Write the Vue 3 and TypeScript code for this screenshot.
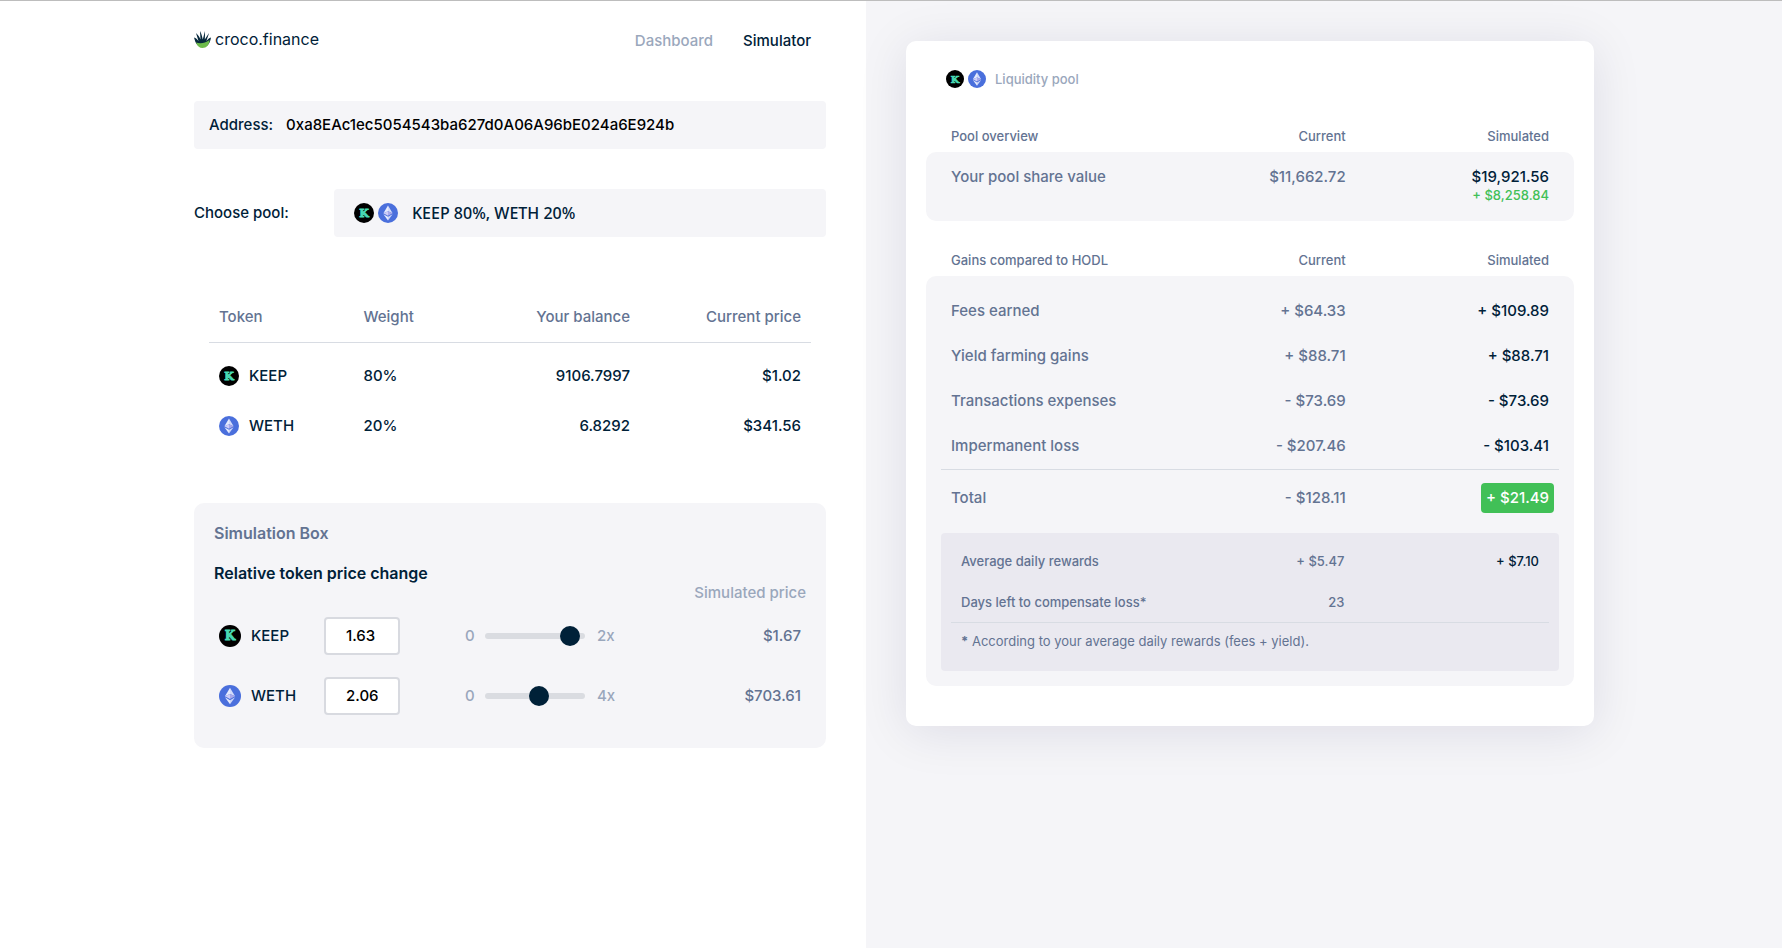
<script setup lang="ts">
import { computed, defineComponent, h, ref } from 'vue'

type Symbol = 'KEEP' | 'WETH'

interface Token {
  symbol: Symbol
  weight: string
  balance: string
  price: string
}

interface Simulation {
  symbol: Symbol
  ratio: string
  max: number
  price: string
}

interface GainRow {
  label: string
  current: string
  simulated: string
}

const TokenIcon = defineComponent({
  props: { symbol: { type: String, required: true } },
  setup(props) {
    return () =>
      props.symbol === 'KEEP'
        ? h('svg', { viewBox: '0 0 20 20', 'aria-hidden': 'true' }, [
            h('circle', { cx: 10, cy: 10, r: 10, fill: '#000' }),
            h(
              'text',
              {
                x: 10,
                y: 14,
                'text-anchor': 'middle',
                'font-family': '"DejaVu Serif", serif',
                'font-weight': 700,
                'font-size': 11,
                fill: '#48dbb4',
                stroke: '#48dbb4',
                'stroke-width': 0.8,
              },
              'K',
            ),
          ])
        : h('svg', { viewBox: '0 0 20 20', 'aria-hidden': 'true' }, [
            h('circle', { cx: 10, cy: 10, r: 10, fill: '#4a6fdc' }),
            h('path', { d: 'M10 2.6 5.4 10.2 10 8.2z', fill: '#e6ebfd' }),
            h('path', { d: 'M10 2.6 14.6 10.2 10 8.2z', fill: '#d3dbfa' }),
            h('path', { d: 'M10 8.2 5.4 10.2 10 12.8z', fill: '#cfcef7' }),
            h('path', { d: 'M10 8.2 14.6 10.2 10 12.8z', fill: '#a9a9ea' }),
            h('path', { d: 'M5.4 11.2 10 13.8V17.6z', fill: '#e6ebfd' }),
            h('path', { d: 'M14.6 11.2 10 13.8V17.6z', fill: '#cdd6f8' }),
          ])
  },
})

const address = ref('0xa8EAc1ec5054543ba627d0A06A96bE024a6E924b')
const pools = ['KEEP 80%, WETH 20%']
const pool = ref(pools[0])

const tokens: Token[] = [
  { symbol: 'KEEP', weight: '80%', balance: '9106.7997', price: '$1.02' },
  { symbol: 'WETH', weight: '20%', balance: '6.8292', price: '$341.56' },
]

const simulations = ref<Simulation[]>([
  { symbol: 'KEEP', ratio: '1.63', max: 2, price: '$1.67' },
  { symbol: 'WETH', ratio: '2.06', max: 4, price: '$703.61' },
])

const gains: GainRow[] = [
  { label: 'Fees earned', current: '+ $64.33', simulated: '+ $109.89' },
  { label: 'Yield farming gains', current: '+ $88.71', simulated: '+ $88.71' },
  { label: 'Transactions expenses', current: '- $73.69', simulated: '- $73.69' },
  { label: 'Impermanent loss', current: '- $207.46', simulated: '- $103.41' },
]

const symbols = computed(() => tokens.map((t) => t.symbol))
</script>

<template>
  <div class="page">
    <main class="left">
      <div class="left-inner">
        <header class="header">
          <a href="#" class="brand">
            <svg class="brand-mark" viewBox="0 0 34 34" aria-hidden="true">
              <path
                d="M0 13C4 14 6 16 9 20L4 4C9 9 11 12 13 17L12 0C15 6 16 10 17.500 17L22 0C22 7 22 11 21.500 17L30 4C28 11 26 15 25 20 28 16 30 14 34 13 33 19 31 25 27 29L8 29C3 25 2 19 0 13Z"
                fill="#06283b"
              />
              <path d="M4 23C13 26 21 25 31 18 31 27 25 34 17 34 11 34 6 30 4 23Z" fill="#6dbb4a" />
            </svg>
            <span>croco.finance</span>
          </a>
          <nav class="nav">
            <a href="#dashboard">Dashboard</a>
            <a href="#simulator" class="active">Simulator</a>
          </nav>
        </header>

        <div class="address">
          <label for="address">Address:</label>
          <input id="address" v-model="address" type="text" spellcheck="false" />
        </div>

        <div class="pool">
          <label for="pool">Choose pool:</label>
          <div class="pool-field">
            <span class="pair pair-20">
              <TokenIcon v-for="s in symbols" :key="s" :symbol="s" />
            </span>
            <select id="pool" v-model="pool">
              <option v-for="p in pools" :key="p">{{ p }}</option>
            </select>
          </div>
        </div>

        <table class="tokens">
          <thead>
            <tr>
              <th class="c-token">Token</th>
              <th class="c-weight">Weight</th>
              <th class="c-balance">Your balance</th>
              <th class="c-price">Current price</th>
            </tr>
          </thead>
          <tbody>
            <tr v-for="t in tokens" :key="t.symbol">
              <td>
                <span class="token"><TokenIcon :symbol="t.symbol" />{{ t.symbol }}</span>
              </td>
              <td>{{ t.weight }}</td>
              <td class="num">{{ t.balance }}</td>
              <td class="num">{{ t.price }}</td>
            </tr>
          </tbody>
        </table>

        <section class="sim">
          <h2>Simulation Box</h2>
          <h3>Relative token price change</h3>
          <p class="sim-caption">Simulated price</p>
          <div v-for="s in simulations" :key="s.symbol" class="sim-row">
            <label class="sim-token" :for="'ratio-' + s.symbol">
              <TokenIcon :symbol="s.symbol" />{{ s.symbol }}
            </label>
            <input :id="'ratio-' + s.symbol" v-model="s.ratio" class="ratio" type="text" inputmode="decimal" />
            <div class="slider">
              <span>0</span>
              <div class="track">
                <input
                  v-model="s.ratio"
                  type="range"
                  min="0"
                  :max="s.max"
                  step="0.01"
                  :aria-label="s.symbol + ' price change'"
                />
              </div>
              <span>{{ s.max }}x</span>
            </div>
            <output class="sim-price">{{ s.price }}</output>
          </div>
        </section>
      </div>
    </main>

    <aside class="right">
      <div class="card">
        <div class="card-title">
          <span class="pair pair-18">
            <TokenIcon v-for="s in symbols" :key="s" :symbol="s" />
          </span>
          <span>Liquidity pool</span>
        </div>

        <table class="grid-table overview">
          <thead>
            <tr>
              <th>Pool overview</th>
              <th>Current</th>
              <th>Simulated</th>
            </tr>
          </thead>
          <tbody>
            <tr>
              <td>Your pool share value</td>
              <td>$11,662.72</td>
              <td>
                $19,921.56
                <span class="delta">+ $8,258.84</span>
              </td>
            </tr>
          </tbody>
        </table>

        <table class="grid-table gains">
          <thead>
            <tr>
              <th>Gains compared to HODL</th>
              <th>Current</th>
              <th>Simulated</th>
            </tr>
          </thead>
          <tbody>
            <tr v-for="g in gains" :key="g.label">
              <td>{{ g.label }}</td>
              <td>{{ g.current }}</td>
              <td>{{ g.simulated }}</td>
            </tr>
            <tr class="total">
              <td>Total</td>
              <td>- $128.11</td>
              <td><span class="badge">+ $21.49</span></td>
            </tr>
          </tbody>
        </table>
        <div class="rewards-wrap">
          <div class="rewards">
            <table class="grid-table rewards-table">
              <tbody>
                <tr>
                  <td>Average daily rewards</td>
                  <td>+ $5.47</td>
                  <td>+ $7.10</td>
                </tr>
                <tr>
                  <td>Days left to compensate loss*</td>
                  <td>23</td>
                  <td></td>
                </tr>
              </tbody>
            </table>
            <p class="note"><b>*</b> According to your average daily rewards (fees + yield).</p>
          </div>
        </div>
      </div>
    </aside>
  </div>
</template>

<style>
body {
  margin: 0;
}
</style>

<style scoped>
.page {
  --dark: #002138;
  --muted: #637392;
  --light: #9aa7bc;
  --panel: #f5f5f8;
  --line: #d8dce3;
  box-sizing: border-box;
  display: grid;
  grid-template-columns: 866fr 916fr;
  min-height: 100vh;
  border-top: 1px solid #bdbdbd;
  background: #fff;
  color: var(--dark);
  font: 500 15px/20px Inter, "Liberation Sans", sans-serif;
}

.page *,
.page *::before {
  box-sizing: border-box;
}

input,
select {
  font: inherit;
  outline: none;
}

h2,
h3,
p {
  margin: 0;
}

a {
  color: inherit;
  text-decoration: none;
}

.left {
  padding: 0 40px;
}

.left-inner {
  max-width: 632px;
  margin-left: auto;
}

.header {
  display: flex;
  justify-content: space-between;
  padding: 28px 15px 0 0;
  height: 100px;
}

.brand {
  display: flex;
  align-items: center;
  gap: 4px;
  height: 20px;
  font-size: 16px;
  font-weight: 400;
}

.brand-mark {
  width: 17px;
  height: 17px;
}

.nav {
  display: flex;
  gap: 30px;
  padding-top: 2px;
}

.nav a {
  height: 20px;
  color: var(--light);
}

.nav .active {
  color: var(--dark);
}

.address {
  display: flex;
  align-items: center;
  gap: 13px;
  height: 48px;
  padding: 0 15px;
  border-radius: 4px;
  background: var(--panel);
}

.address input {
  flex: 1;
  min-width: 0;
  padding: 0;
  border: 0;
  background: transparent;
  color: #000;
}

.pool {
  display: flex;
  align-items: center;
  margin-top: 40px;
}

.pool > label {
  width: 140px;
}

.pool-field {
  display: flex;
  flex: 1;
  align-items: center;
  gap: 14px;
  height: 48px;
  padding: 0 20px;
  border-radius: 4px;
  background: var(--panel);
}

.pool-field select {
  flex: 1;
  appearance: none;
  padding: 0;
  border: 0;
  background: transparent;
  color: var(--dark);
  font: 500 16px/24px "Noto Sans", sans-serif;
}

.pair {
  display: flex;
  gap: 4px;
}

.pair-20 svg {
  width: 20px;
  height: 20px;
}

.pair-18 svg {
  width: 18px;
  height: 18px;
}

.tokens {
  width: calc(100% - 30px);
  margin: 54px 15px 0;
  border-collapse: collapse;
  table-layout: fixed;
}

.tokens th {
  height: 51px;
  padding: 1px 10px 0;
  border-bottom: 1px solid var(--line);
  color: var(--muted);
  font-weight: 500;
  text-align: left;
}

.tokens .c-token {
  width: 24%;
}

.tokens .c-weight {
  width: 20%;
}

.tokens .c-balance {
  text-align: right;
}

.tokens .c-price {
  width: 171px;
  text-align: right;
}

.tokens td {
  height: 50px;
  padding: 0 10px;
}

.tokens tbody::before {
  display: block;
  height: 8px;
  content: "";
}

.tokens .num {
  text-align: right;
}

.token {
  display: flex;
  align-items: center;
  gap: 10px;
}

.token svg {
  width: 20px;
  height: 20px;
}

.sim {
  height: 245px;
  margin-top: 52px;
  padding: 20px 20px 0;
  border-radius: 10px;
  background: var(--panel);
}

.sim h2 {
  color: var(--muted);
  font-size: 16px;
  font-weight: 600;
}

.sim h3 {
  margin-top: 20px;
  font-size: 16px;
  font-weight: 600;
}

.sim-caption {
  color: var(--light);
  text-align: right;
}

.sim-row {
  display: flex;
  align-items: center;
  height: 60px;
  margin: 3px 5px 0;
}

.sim-row + .sim-row {
  margin-top: 0;
}

.sim-token {
  display: flex;
  align-items: center;
  gap: 10px;
  width: 105px;
}

.sim-token svg {
  width: 22px;
  height: 22px;
}

.ratio {
  width: 76px;
  height: 38px;
  padding: 0 20px;
  border: 2px solid #d8dae0;
  border-radius: 4px;
  background: #fff;
  color: #000;
}

.slider {
  display: flex;
  align-items: center;
  margin-left: 65px;
  color: var(--light);
}

.slider span:first-child {
  width: 20px;
}

.slider span:last-child {
  padding-left: 12px;
}

.track {
  display: flex;
  align-items: center;
  width: 100px;
  height: 6px;
  border-radius: 3px;
  background: #dadce1;
}

.track input {
  flex: none;
  appearance: none;
  width: 124px;
  height: 20px;
  margin: 0 0 0 -10px;
  background: transparent;
}

.track input::-webkit-slider-thumb {
  appearance: none;
  width: 20px;
  height: 20px;
  border-radius: 50%;
  background: var(--dark);
}

.sim-price {
  margin-left: auto;
  color: var(--muted);
}

.right {
  padding: 40px;
  background: var(--panel);
}

.card {
  max-width: 688px;
  padding: 28px 20px 40px;
  border-radius: 10px;
  background: #fff;
  box-shadow: 0 6px 50px rgba(22, 6, 71, 0.1);
}

.card-title {
  display: flex;
  align-items: center;
  gap: 9px;
  height: 20px;
  padding-left: 20px;
  color: var(--light);
  font-size: 13px;
}

.grid-table,
.grid-table thead,
.grid-table tbody {
  display: block;
}

.grid-table tr {
  display: grid;
  grid-template-columns: 34fr 32fr 34fr;
  align-items: center;
}

.grid-table th,
.grid-table td {
  padding: 0;
  font-weight: 500;
  text-align: right;
  white-space: nowrap;
  color: var(--muted);
}

.grid-table th {
  font-size: 13px;
}

.grid-table th:first-child,
.grid-table td:first-child {
  text-align: left;
}

.grid-table td:last-child {
  color: var(--dark);
}

.grid-table thead {
  padding: 0 25px;
}

.grid-table thead tr {
  height: 32px;
}

.overview {
  margin-top: 31px;
}

.overview tbody {
  height: 69px;
  padding: 15px 25px;
  border-radius: 10px;
  background: var(--panel);
}

.overview tbody tr {
  align-items: start;
}

.overview .delta {
  display: block;
  color: #41c057;
  font-size: 13px;
  line-height: 16px;
}

.gains {
  margin-top: 23px;
}

.gains tbody {
  padding: 12px 15px 0;
  border-radius: 10px 10px 0 0;
  background: var(--panel);
}

.gains tbody tr {
  height: 45px;
  padding: 0 10px;
}

.gains tbody .total {
  height: 64px;
  margin-top: 1px;
  padding-bottom: 8px;
  border-top: 1px solid var(--line);
}

.gains .badge {
  display: inline-block;
  margin-right: -5px;
  padding: 5px;
  border-radius: 4px;
  background: #41c057;
  color: #fff;
}

.rewards-wrap {
  padding: 0 15px 15px;
  border-radius: 0 0 10px 10px;
  background: var(--panel);
}

.rewards {
  height: 138px;
  padding: 7px 10px 0;
  border-radius: 4px;
  background: #eae9f0;
}

.rewards-table {
  padding: 0 10px;
  border-bottom: 1px solid var(--line);
  font-size: 13px;
}

.rewards-table tr {
  grid-template-columns: 34fr 33fr 34fr;
  height: 41px;
}

.note {
  padding: 8px 10px 0;
  color: var(--muted);
  font-size: 13px;
  font-weight: 400;
}
</style>
